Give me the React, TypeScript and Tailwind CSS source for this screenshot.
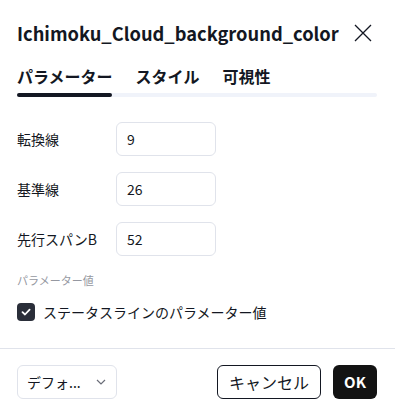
import React from "react";

const font = { fontFamily: '"Noto Sans CJK JP", "Noto Sans", sans-serif' };

function Row({ label, value }: { label: string; value: string }) {
  return (
    <div className="flex items-center h-[34px]">
      <div className="w-[99px] text-[14px] text-[#131722]">{label}</div>
      <div className="w-[100px] h-[34px] border border-[#e0e3eb] rounded-[6px] flex items-center px-[10px] text-[14px] text-[#131722]">
        {value}
      </div>
    </div>
  );
}

export default function App() {
  return (
    <div className="w-[395px] h-[414px] bg-white relative overflow-hidden" style={font}>
      <div className="pl-[17px] pr-[18px]">
        <div className="flex items-center h-[28px] mt-[19px]">
          <div className="text-[18.3px] font-semibold text-[#131722] leading-[28px] whitespace-nowrap">
            Ichimoku_Cloud_background_color
          </div>
          <svg width="18" height="18" viewBox="0 0 18 18" className="shrink-0 ml-auto mr-[5px]">
            <path d="M1 1L17 17M17 1L1 17" stroke="#131722" strokeWidth="1.3" />
          </svg>
        </div>
        <div className="mt-[17px] flex items-center gap-[23px] h-[24px] text-[16px] font-bold text-[#131722]">
          <span>パラメーター</span>
          <span>スタイル</span>
          <span>可視性</span>
        </div>
        <div className="mt-[5px] h-[4px] rounded-full bg-[#f0f3fa] relative">
          <div className="absolute left-0 top-0 h-[4px] w-[95px] rounded-full bg-[#131722]" />
        </div>
        <div className="mt-[25px] flex flex-col gap-[16px]">
          <Row label="転換線" value="9" />
          <Row label="基準線" value="26" />
          <Row label="先行スパンB" value="52" />
        </div>
        <div className="mt-[16px] text-[11px] text-[#9598a1] h-[16px] leading-[16px]">パラメーター値</div>
        <div className="mt-[15px] flex items-center h-[18px]">
          <div className="w-[18px] h-[18px] rounded-[4px] bg-[#2a2e39] flex items-center justify-center">
            <svg width="12" height="12" viewBox="0 0 12 12">
              <path d="M2.5 6.2L5 8.5L9.6 3.6" stroke="white" strokeWidth="1.8" fill="none" strokeLinecap="round" strokeLinejoin="round" />
            </svg>
          </div>
          <span className="ml-[8px] text-[14px] text-[#131722]">ステータスラインのパラメーター値</span>
        </div>
      </div>
      <div className="mt-[27px] h-px bg-[#e0e3eb]" />
      <div className="pl-[17px] pr-[18px] mt-[16px] flex items-center justify-between">
        <div className="w-[100px] h-[34px] border border-[#e0e3eb] rounded-[6px] flex items-center justify-between pl-[9px] pr-[10px] text-[14px] text-[#131722]">
          <span>デフォ...</span>
          <svg width="10" height="6" viewBox="0 0 10 6">
            <path d="M1 1L5 5L9 1" stroke="#6a6d78" strokeWidth="1.2" fill="none" />
          </svg>
        </div>
        <div className="flex items-center gap-[12px]">
          <div className="w-[104px] h-[34px] border border-[#131722] rounded-[6px] flex items-center justify-center text-[16px] text-[#131722]">
            キャンセル
          </div>
          <div className="w-[44px] h-[34px] rounded-[6px] bg-[#131313] flex items-center justify-center text-[15px] font-bold text-white">
            OK
          </div>
        </div>
      </div>
    </div>
  );
}
